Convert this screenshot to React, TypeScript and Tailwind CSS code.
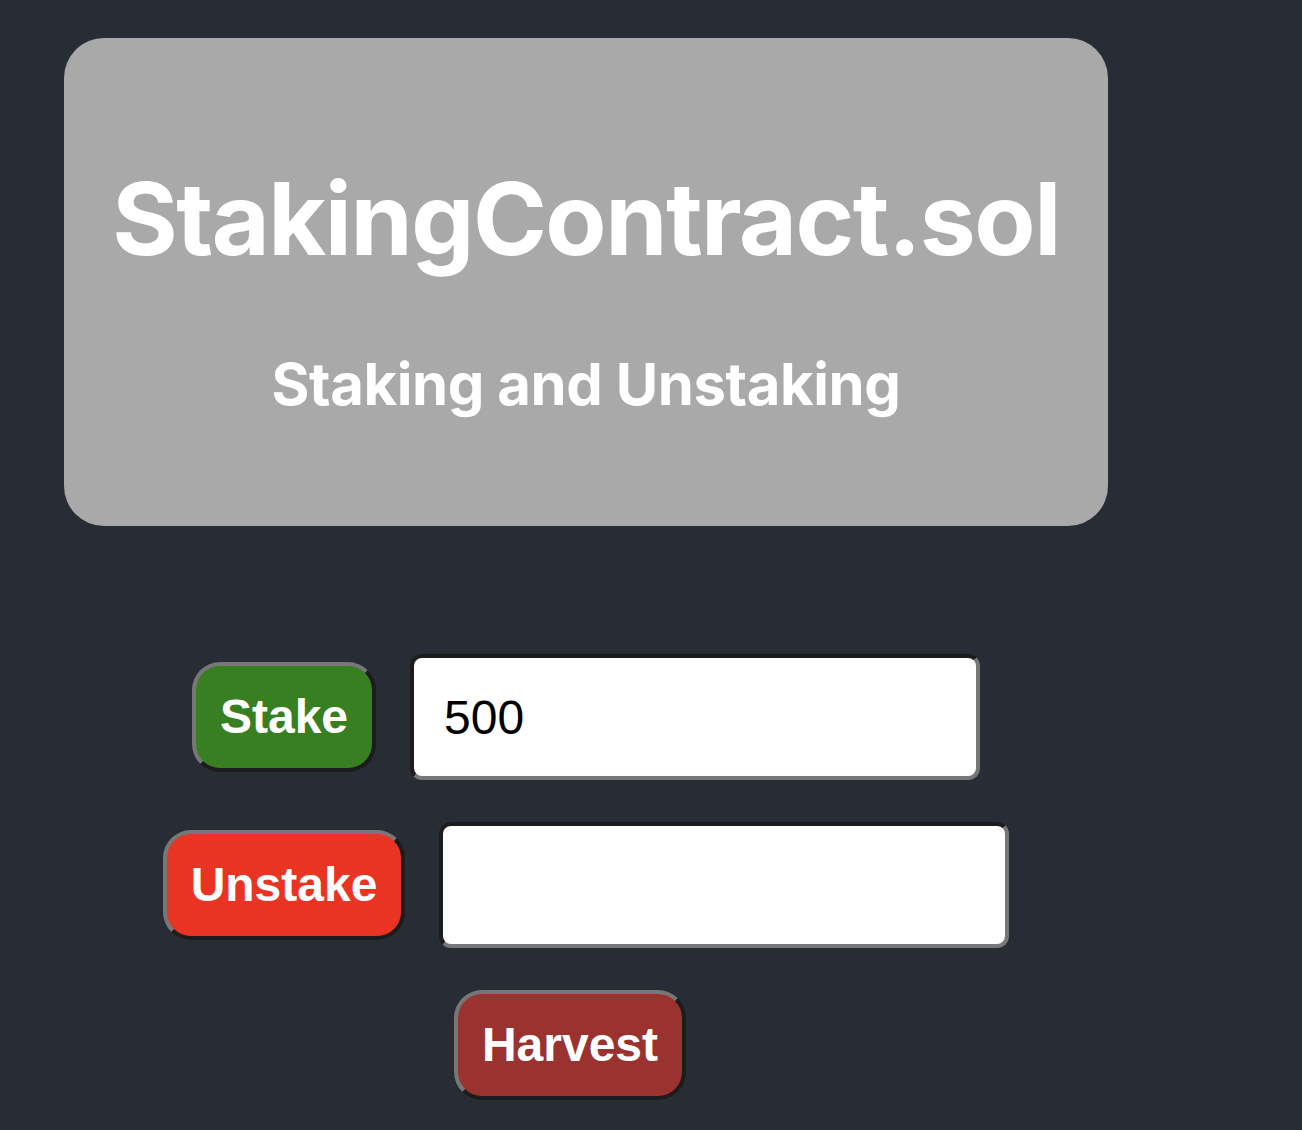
import React, { useState } from "react"

const btnBase =
  "h-[110px] px-[24px] rounded-[28px] border-4 border-t-[#777777] border-l-[#777777] border-b-[#1c1c1c] border-r-[#1c1c1c] text-white text-[48px] font-bold font-['Liberation_Sans',Arial,sans-serif] leading-none flex items-center justify-center"

const inputBase =
  "w-[570px] h-[126px] rounded-[12px] border-4 border-t-[#1c1c1c] border-l-[#1c1c1c] border-b-[#777777] border-r-[#777777] bg-white pl-[30px] text-black text-[48px] font-['Liberation_Sans',Arial,sans-serif] outline-none"

export default function App() {
  const [stake, setStake] = useState("500")
  const [unstake, setUnstake] = useState("")

  return (
    <div className="min-h-[1130px] w-full bg-[#282c34]">
      <div className="ml-[64px] w-[1044px] pt-[38px]">
        <header className="h-[488px] rounded-[40px] bg-[#a9a9a9] flex flex-col items-center text-white font-['Inter',sans-serif]">
          <h1 className="mt-[131px] text-[100px] font-bold leading-none tracking-[-1.5px]">StakingContract.sol</h1>
          <h2 className="mt-[86px] text-[58px] font-bold leading-none tracking-[-0.4px]">Staking and Unstaking</h2>
        </header>

        <main className="mt-[128px] flex flex-col items-center">
          <div className="flex items-center gap-[34px]">
            <button className={btnBase + " bg-[#387f22]"}>Stake</button>
            <input className={inputBase} value={stake} onChange={(e) => setStake(e.target.value)} />
          </div>

          <div className="mt-[42px] flex items-center gap-[34px]">
            <button className={btnBase + " bg-[#e93423]"}>Unstake</button>
            <input className={inputBase} value={unstake} onChange={(e) => setUnstake(e.target.value)} />
          </div>

          <button className={btnBase + " mt-[42px] mr-[32px] bg-[#9a3330]"}>Harvest</button>
        </main>
      </div>
    </div>
  )
}
